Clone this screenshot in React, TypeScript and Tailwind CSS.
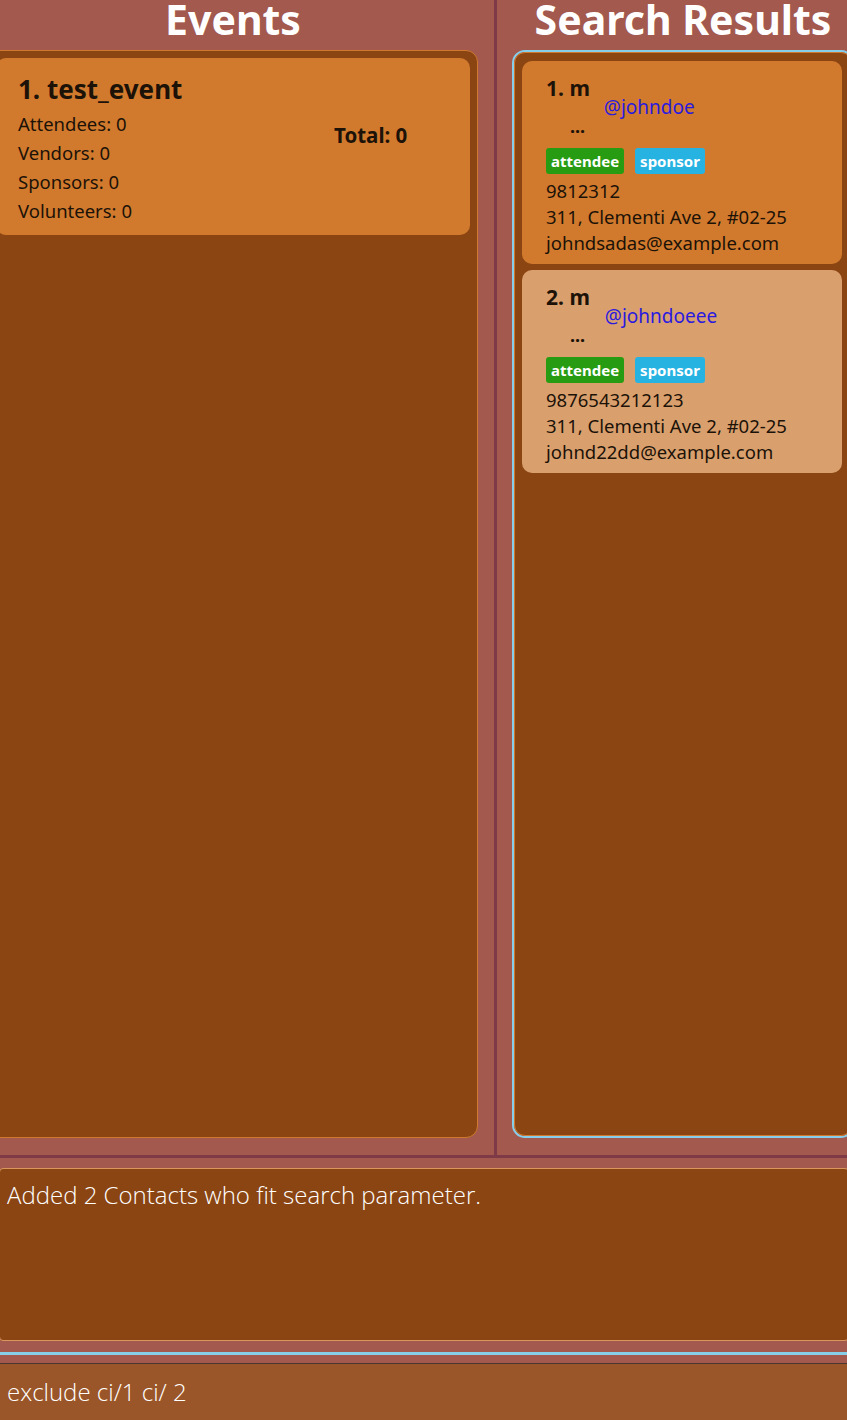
import React from "react";

const font = { fontFamily: '"Noto Sans", "Open Sans", sans-serif' };
const light = { fontFamily: '"Open Sans", "Noto Sans", sans-serif' };

function Tag({ label, color }: { label: string; color: string }) {
  return (
    <span
      className={`inline-flex h-[26px] items-center rounded-[3px] px-[5px] text-[15px] font-bold text-white ${color}`}
    >
      {label}
    </span>
  );
}

function PersonCard({
  idx,
  handle,
  phone,
  email,
  bg,
  handleGap,
}: {
  idx: number;
  handle: string;
  phone: string;
  email: string;
  bg: string;
  handleGap: string;
}) {
  return (
    <div className={`h-[203px] w-[320px] shrink-0 rounded-[10px] ${bg} pl-[24px] pt-[14px] text-[#1c1208]`}>
      <div className="flex items-start">
        <div className="flex flex-col">
          <span className="text-[21px] font-bold leading-[26px]">{idx}. m</span>
          <span className="mt-[15px] pl-[24px] text-[18px] font-bold leading-[20px]">...</span>
        </div>
        <span className={`${handleGap} mt-[20px] text-[19px] leading-[24px] text-[#2a1adf]`}>@{handle}</span>
      </div>
      <div className="mt-[12px] flex gap-[11px]">
        <Tag label="attendee" color="bg-[#279c12]" />
        <Tag label="sponsor" color="bg-[#27b3e2]" />
      </div>
      <div className="mt-[4px] flex flex-col text-[18.5px] leading-[26px]">
        <span>{phone}</span>
        <span>311, Clementi Ave 2, #02-25</span>
        <span>{email}</span>
      </div>
    </div>
  );
}

export default function App() {
  return (
    <div
      className="flex h-[1420px] w-[847px] flex-col overflow-hidden bg-[#a3594d]"
      style={font}
    >
      <div className="flex h-[1155px] shrink-0">
        {/* Left column */}
        <div className="ml-[-12px] flex w-[506px] shrink-0 flex-col">
          <div className="flex h-[50px] w-[490px] justify-center overflow-hidden">
            <span className="mt-[-10px] whitespace-nowrap text-[41px] font-bold leading-[58px] text-white">Events</span>
          </div>
          <div className="h-[1088px] w-[490px] rounded-[12px] border border-[#cf7a2f] bg-[#8b4513] p-[7px]">
            <div className="flex h-[177px] rounded-[10px] bg-[#d17a2d] pl-[22px] pt-[14px] text-[#1c1208]">
              <div className="flex w-[316px] flex-col">
                <span className="text-[26px] font-bold leading-[34px]">1. test_event</span>
                <div className="mt-[3px] flex flex-col text-[18.5px] leading-[29px]">
                  <span>Attendees: 0</span>
                  <span>Vendors: 0</span>
                  <span>Sponsors: 0</span>
                  <span>Volunteers: 0</span>
                </div>
              </div>
              <span className="mt-[50px] text-[20.5px] font-bold leading-[26px]">Total: 0</span>
            </div>
          </div>
        </div>
        {/* Divider */}
        <div className="w-[3px] shrink-0 bg-[#7e3b47]" />
        {/* Right column */}
        <div className="flex shrink-0 flex-col pl-[15px]">
          <div className="flex h-[50px] w-[342px] justify-center overflow-hidden">
            <span className="mt-[-10px] whitespace-nowrap text-[41px] font-bold leading-[58px] text-white">
              Search Results
            </span>
          </div>
          <div className="h-[1088px] w-[342px] rounded-[13px] border-2 border-[#87ceeb]">
            <div className="flex h-full flex-col gap-[6px] rounded-[11px] border border-[#cf7a2f] bg-[#8b4513] px-[7px] pt-[8px]">
              <PersonCard
                idx={1}
                handle="johndoe"
                phone="9812312"
                email="johndsadas@example.com"
                bg="bg-[#d17a2d]"
                handleGap="ml-[14px]"
              />
              <PersonCard
                idx={2}
                handle="johndoeee"
                phone="9876543212123"
                email="johnd22dd@example.com"
                bg="bg-[#d9a06e]"
                handleGap="ml-[15px]"
              />
            </div>
          </div>
        </div>
      </div>
      {/* Horizontal divider */}
      <div className="h-[3px] shrink-0 bg-[#7e3b47]" />
      {/* Result display */}
      <div
        className="mt-[10px] ml-[-1px] h-[173px] w-[850px] shrink-0 rounded-[4px] border border-[#d9975e] bg-[#8b4513] pl-[7px] pt-[10px]"
        style={light}
      >
        <span className="text-[24px] font-light leading-[32px] text-white">
          Added 2 Contacts who fit search parameter.
        </span>
      </div>
      <div className="mt-[11px] h-[3px] shrink-0 bg-[#87ceeb]" />
      <div className="mt-[8px] h-[1px] shrink-0 bg-[#4a3630]" />
      <div className="flex h-[56px] shrink-0 items-center bg-[#9a5628] pl-[7px]" style={light}>
        <span className="text-[24px] font-light leading-[32px] text-white">exclude ci/1 ci/ 2</span>
      </div>
    </div>
  );
}
